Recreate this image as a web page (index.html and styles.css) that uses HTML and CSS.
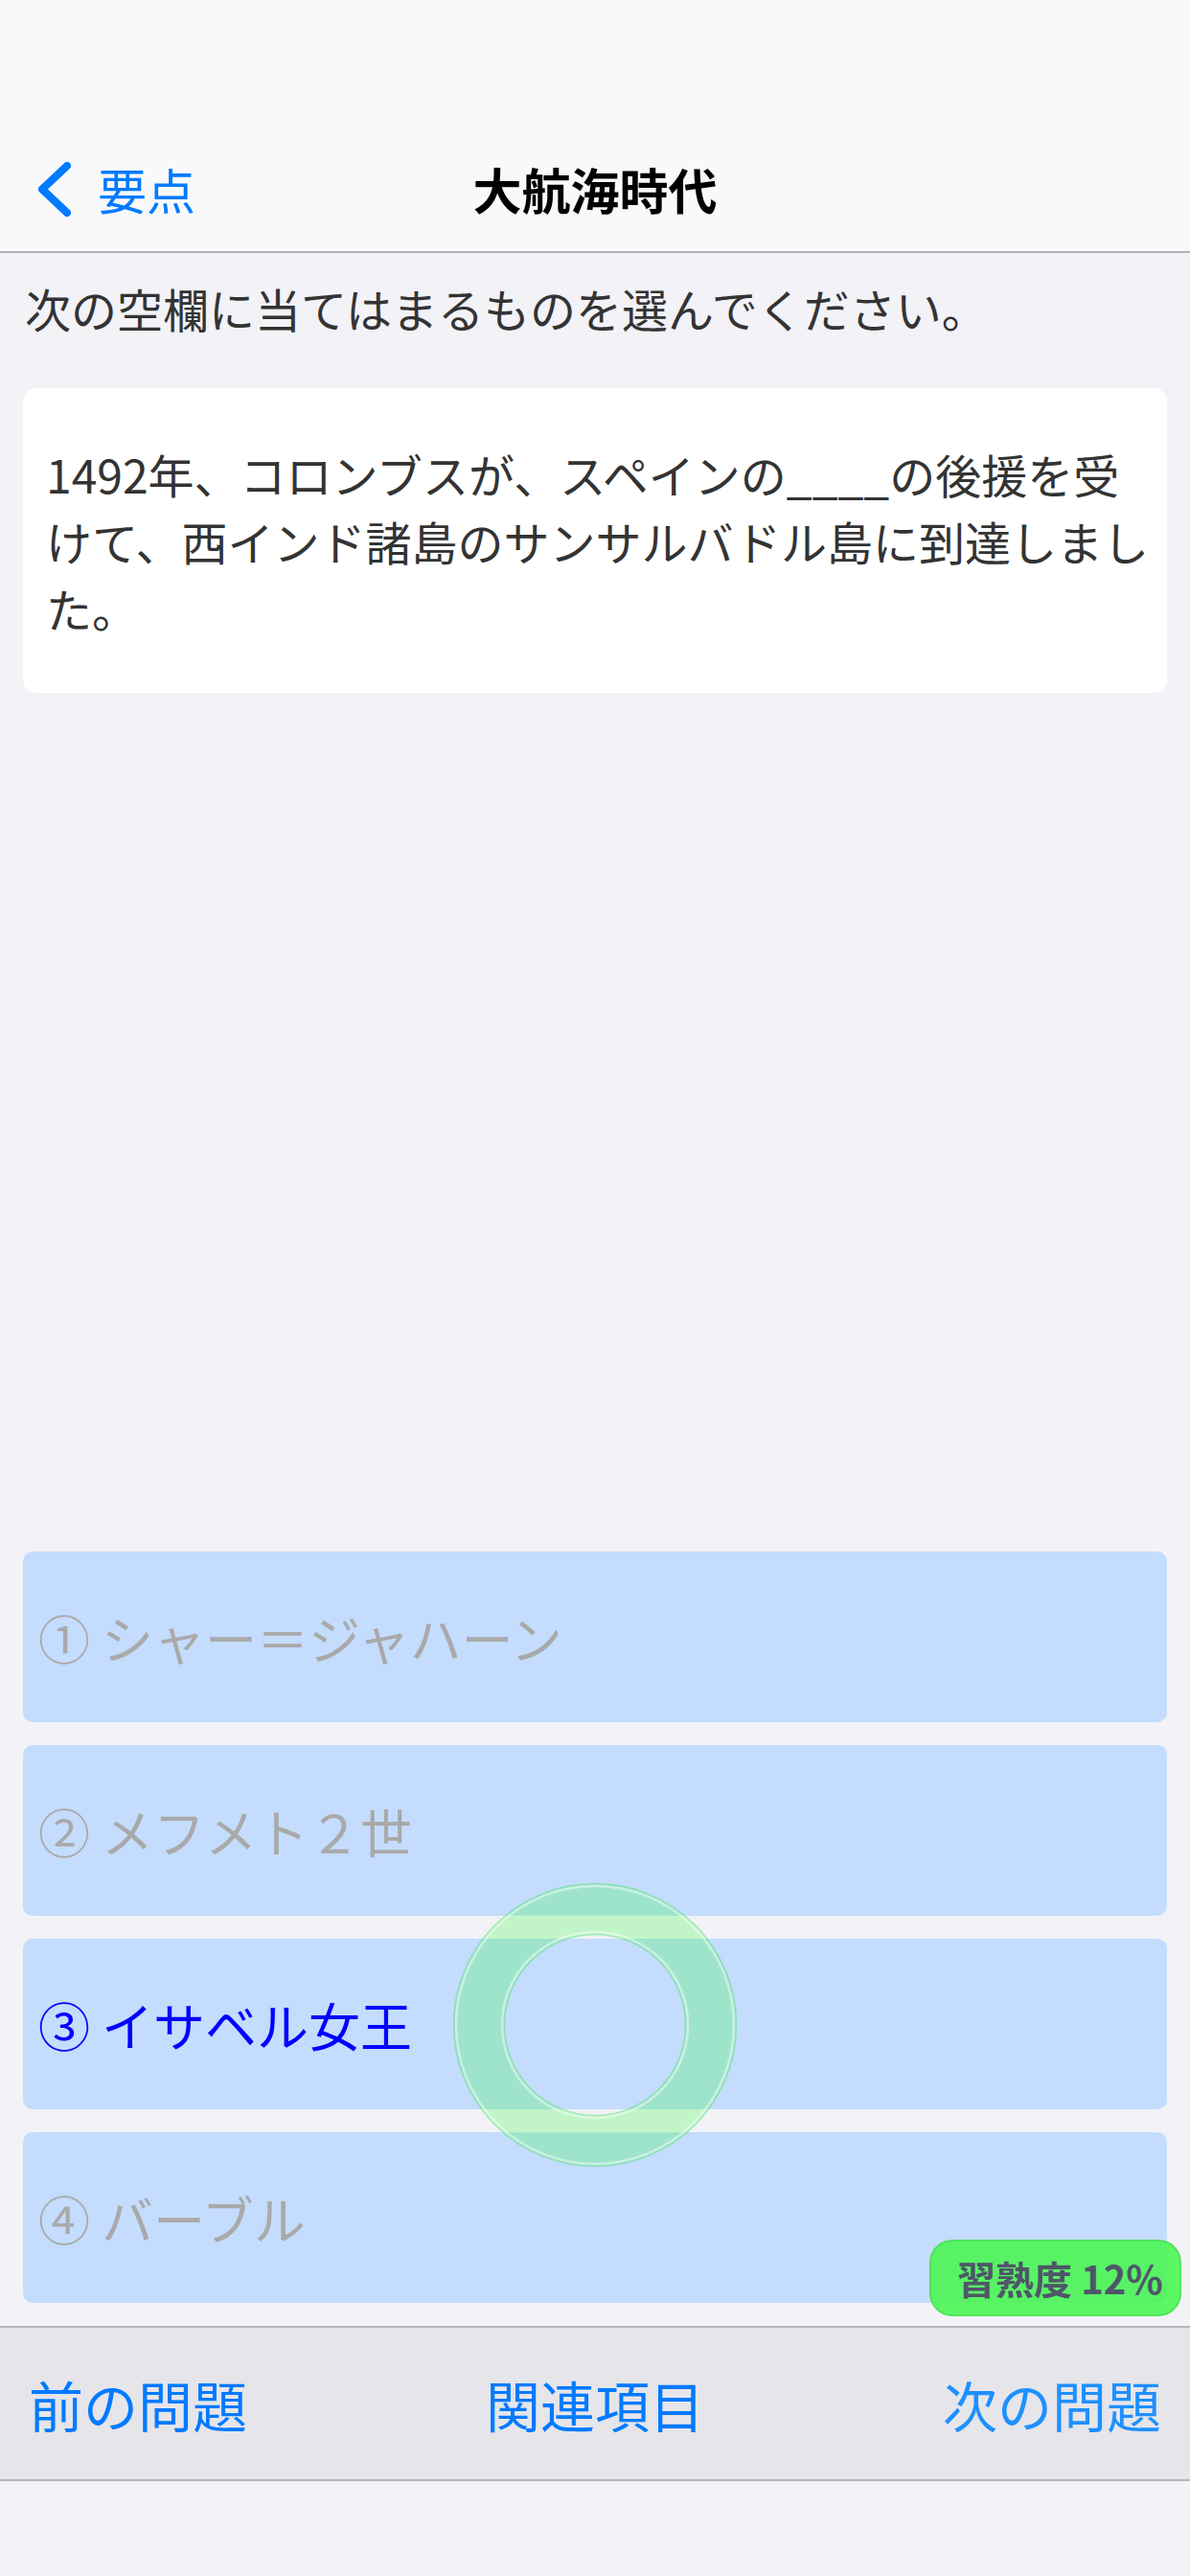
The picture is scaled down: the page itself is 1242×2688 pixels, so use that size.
FILE: index.html
```html
<!DOCTYPE html>
<html lang="ja">
<head>
<meta charset="utf-8">
<title>大航海時代</title>
<link rel="stylesheet" href="styles.css">
</head>
<body>
<div class="page">
  <header class="nav">
    <div class="nav-row">
      <a class="back">
        <svg class="chev" width="34" height="57" viewBox="0 0 34 57"><path d="M30 4 L4 28.5 L30 53" fill="none" stroke="#007aff" stroke-width="8" stroke-linecap="round" stroke-linejoin="round"/></svg>
        <span class="back-label">要点</span>
      </a>
      <h1 class="title">大航海時代</h1>
      <div></div>
    </div>
  </header>
  <main class="main">
    <p class="prompt">次の空欄に当てはまるものを選んでください。</p>
    <div class="card">1492年、コロンブスが、スペインの____の後援を受けて、西インド諸島のサンサルバドル島に到達しました。</div>
    <div class="options">
      <div class="option">① シャー＝ジャハーン</div>
      <div class="option">② メフメト２世</div>
      <div class="option selected">③ イサベル女王</div>
      <div class="option">④ バーブル</div>
    </div>
  </main>
  <footer class="toolbar">
    <span class="tb-btn">前の問題</span>
    <span class="tb-btn">関連項目</span>
    <span class="tb-btn next">次の問題</span>
  </footer>
  <div class="home-area"></div>

  <svg class="ring" width="300" height="300" viewBox="0 0 300 300">
    <circle cx="150" cy="150" r="121" fill="none" stroke="rgba(40,255,50,0.245)" stroke-width="54"/>
    <circle cx="150" cy="150" r="147.5" fill="none" stroke="rgba(110,220,150,0.45)" stroke-width="1.5"/>
    <circle cx="150" cy="150" r="145" fill="none" stroke="rgba(255,255,255,0.45)" stroke-width="2.5"/>
    <circle cx="150" cy="150" r="97" fill="none" stroke="rgba(255,255,255,0.45)" stroke-width="2.5"/>
    <circle cx="150" cy="150" r="94.5" fill="none" stroke="rgba(110,220,150,0.45)" stroke-width="1.5"/>
  </svg>
  <div class="badge">習熟度 12%</div>
</div>
</body>
</html>
```

FILE: styles.css
```css
* { box-sizing: border-box; }
html, body { margin: 0; padding: 0; }
body {
  width: 1242px;
  height: 2688px;
  background: #f2f2f7;
  font-family: "Noto Sans CJK JP", "Noto Sans", sans-serif;
  overflow: hidden;
}
.page {
  position: relative;
  width: 1242px;
  height: 2688px;
  display: flex;
  flex-direction: column;
}
.nav {
  background: #f9f9fb;
  padding-top: 132px;
  border-bottom: 2px solid #b2b2b4;
  flex: none;
}
.nav-row {
  height: 130px;
  display: grid;
  grid-template-columns: 1fr auto 1fr;
  align-items: center;
}
.back {
  display: flex;
  align-items: center;
  padding-left: 40px;
  gap: 28px;
  color: #007aff;
  font-size: 51px;
  line-height: 1;
}
.chev { display: block; }
.title {
  margin: 0;
  font-size: 51px;
  font-weight: 700;
  color: #000;
  line-height: 1;
}
.main {
  flex: 1;
  display: flex;
  flex-direction: column;
  padding: 27px 24px 24px;
}
.prompt {
  margin: 0;
  font-size: 48px;
  line-height: 60px;
  color: #333;
  padding-left: 2px;
}
.card {
  margin-top: 54px;
  background: #fff;
  border-radius: 14px;
  padding: 54px 12px 54px 24px;
  font-size: 48px;
  line-height: 70px;
  color: #333;
}
.options {
  margin-top: auto;
  display: flex;
  flex-direction: column;
  gap: 24px;
}
.option {
  height: 178px;
  display: flex;
  align-items: center;
  padding-left: 16px;
  background: #c4dcfd;
  border-radius: 10px;
  font-size: 54px;
  color: #a9a9a9;
}
.option.selected { color: #0000ff; }
.toolbar {
  flex: none;
  height: 162px;
  background: #e5e5ea;
  border-top: 2px solid #b6b6ba;
  border-bottom: 2px solid #b6b6ba;
  display: flex;
  justify-content: space-between;
  align-items: center;
  padding: 0 30px;
}
.tb-btn {
  font-size: 57px;
  color: #007aff;
  line-height: 1;
}
.tb-btn.next { color: #1e90ff; }
.home-area {
  flex: none;
  height: 99px;
  background: #f2f2f7;
}
.ring {
  position: absolute;
  left: 471px;
  top: 1963px;
}
.badge {
  position: absolute;
  left: 970px;
  top: 2337px;
  width: 263px;
  height: 80px;
  border-radius: 24px;
  background: rgba(72, 246, 80, 0.88);
  border: 2px solid rgba(70, 215, 80, 0.55);
  display: flex;
  align-items: center;
  justify-content: center;
  padding-left: 10px;
  font-size: 40px;
  font-weight: 700;
  color: #4f5668;
  line-height: 1;
}
```
